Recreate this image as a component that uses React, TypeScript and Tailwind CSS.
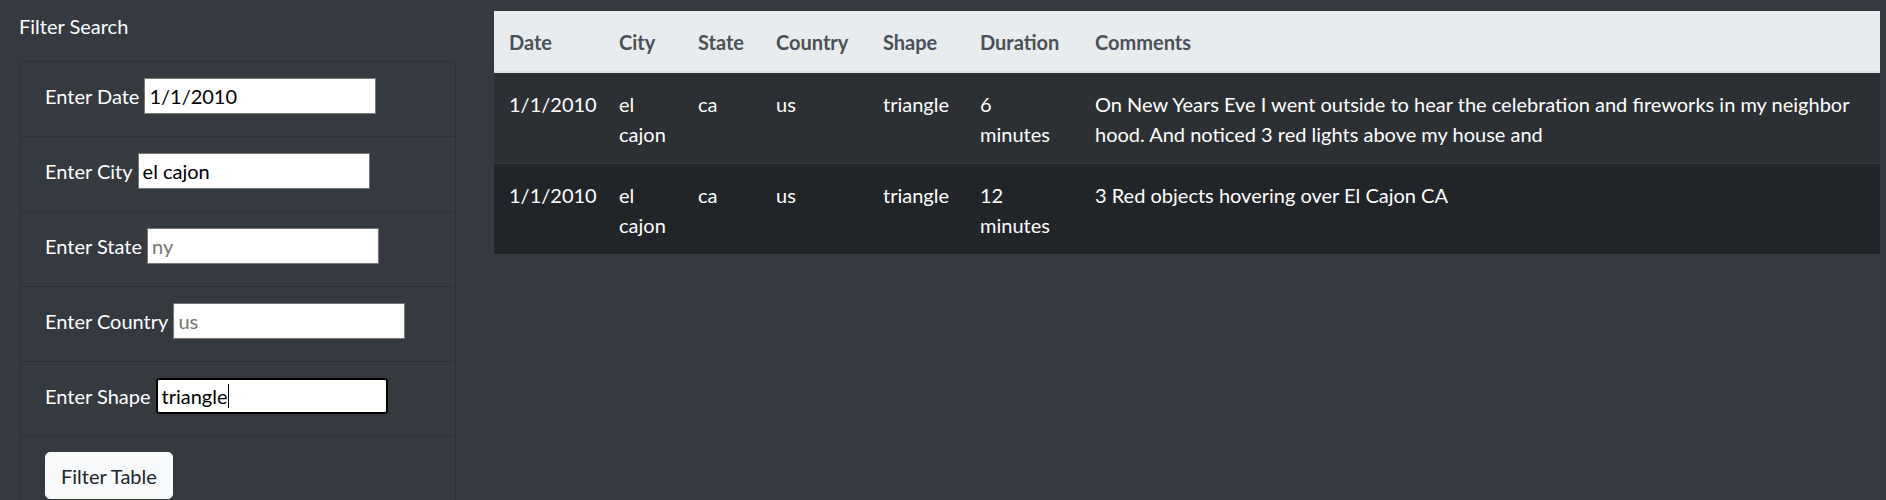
import { useState } from 'react'

type Sighting = {
  datetime: string
  city: string
  state: string
  country: string
  shape: string
  duration: string
  comments: string
}

const sightings: Sighting[] = [
  {
    datetime: '1/1/2010',
    city: 'el cajon',
    state: 'ca',
    country: 'us',
    shape: 'triangle',
    duration: '6 minutes',
    comments:
      'On New Years Eve I went outside to hear the celebration and fireworks in my neighbor hood. And noticed 3 red lights above my house and',
  },
  {
    datetime: '1/1/2010',
    city: 'el cajon',
    state: 'ca',
    country: 'us',
    shape: 'triangle',
    duration: '12 minutes',
    comments: '3 Red objects hovering over El Cajon CA',
  },
]

const filters = [
  { key: 'datetime', label: 'Enter Date', placeholder: '1/1/2010', value: '1/1/2010' },
  { key: 'city', label: 'Enter City', placeholder: 'el cajon', value: 'el cajon' },
  { key: 'state', label: 'Enter State', placeholder: 'ny', value: '' },
  { key: 'country', label: 'Enter Country', placeholder: 'us', value: '' },
  { key: 'shape', label: 'Enter Shape', placeholder: 'circle', value: 'triangle' },
]

const columns = [
  { title: 'Date', width: 'w-[110px]' },
  { title: 'City', width: 'w-[79px]' },
  { title: 'State', width: 'w-[78px]' },
  { title: 'Country', width: 'w-[107px]' },
  { title: 'Shape', width: 'w-[97px]' },
  { title: 'Duration', width: 'w-[115px]' },
  { title: 'Comments', width: 'w-auto' },
]

export default function App() {
  const [values, setValues] = useState<Record<string, string>>(
    Object.fromEntries(filters.map((f) => [f.key, f.value]))
  )

  return (
    <div className="min-h-screen bg-[#343a40] flex font-['Lato','Segoe_UI',sans-serif] text-[20px] leading-[30px] text-white">
      {/* Sidebar filters */}
      <div className="w-[475px] shrink-0 pl-[19px] pr-[19px]">
        <div className="pt-[11px] pb-[20px]">Filter Search</div>
        <ul className="ml-[1px] rounded-[5px] border border-black/15">
          {filters.map((f) => (
            <li key={f.key} className="h-[75px] border-b border-black/15 pl-[24px] pt-[16px]">
              <div className="flex items-center gap-[5px]">
                <label htmlFor={f.key}>{f.label}</label>
                <div className="relative">
                  <input
                    id={f.key}
                    type="text"
                    value={values[f.key]}
                    placeholder={f.placeholder}
                    onChange={(e) => setValues({ ...values, [f.key]: e.target.value })}
                    className={`w-[232px] h-[36px] bg-white text-[#000] px-[4px] placeholder-[#757575] outline-none ${
                      f.key === 'shape' ? 'border-2 border-black rounded-[3px]' : 'border border-[#767676]'
                    }`}
                  />
                  {/* caret of the focused field */}
                  {f.key === 'shape' && (
                    <span className="pointer-events-none absolute left-[6px] top-[6px] flex items-center h-[24px]">
                      <span className="invisible">{values[f.key]}</span>
                      <span className="w-[1px] h-[24px] bg-black" />
                    </span>
                  )}
                </div>
              </div>
            </li>
          ))}
          <li className="pl-[24px] pt-[15px] pb-[15px]">
            <button className="h-[47px] px-[15px] rounded-[5px] bg-[#f8f9fa] border border-[#f8f9fa] text-[#212529]">
              Filter Table
            </button>
          </li>
        </ul>
      </div>

      {/* Results table */}
      <div className="flex-1 pl-[19px] pt-[11px] pr-[6px]">
        <table className="w-full table-fixed border-collapse">
          <colgroup>
            {columns.map((c) => (
              <col key={c.title} className={c.width} />
            ))}
          </colgroup>
          <thead>
            <tr className="bg-[#e9ecef] text-[#495057]">
              {columns.map((c) => (
                <th key={c.title} className="text-left font-bold px-[15px] pt-[16px] pb-[14px] border-b-2 border-[#dee2e6] align-bottom">
                  {c.title}
                </th>
              ))}
            </tr>
          </thead>
          <tbody>
            {sightings.map((s, i) => (
              <tr key={i} className={i % 2 === 0 ? 'bg-[#2c3034]' : 'bg-[#212529]'}>
                {[s.datetime, s.city, s.state, s.country, s.shape, s.duration, s.comments].map((v, j) => (
                  <td key={j} className="px-[15px] pt-[16px] pb-[14px] align-top border-t border-[#32383e]">
                    {v}
                  </td>
                ))}
              </tr>
            ))}
          </tbody>
        </table>
      </div>
    </div>
  )
}
